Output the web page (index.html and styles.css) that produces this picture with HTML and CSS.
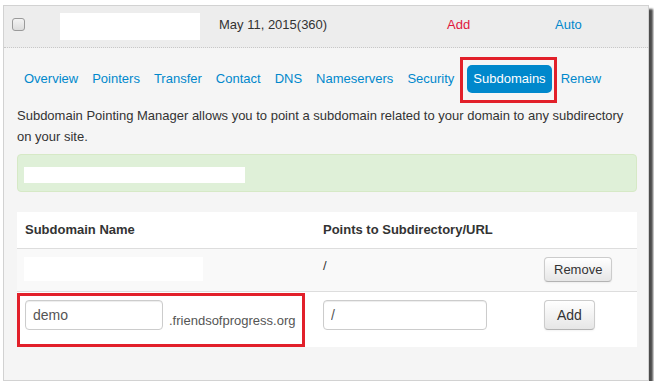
FILE: index.html
```html
<!DOCTYPE html>
<html lang="en">
<head>
  <title>Subdomains</title>
  <link rel="stylesheet" href="styles.css">
</head>
<body>

  <div class="shot">
    <div class="domain-row">
      <div class="cell-check"><span class="checkbox"></span></div>
      <div><span class="mask mask-name"></span></div>
      <div class="date">May 11, 2015(360)</div>
      <div><a class="link-add" href="#">Add</a></div>
      <div><a class="link-auto" href="#">Auto</a></div>
    </div>

    <div class="panel">
      <ul class="tabs">
        <li><a href="#">Overview</a></li>
        <li><a href="#">Pointers</a></li>
        <li><a href="#">Transfer</a></li>
        <li><a href="#">Contact</a></li>
        <li><a href="#">DNS</a></li>
        <li><a href="#">Nameservers</a></li>
        <li><a href="#">Security</a></li>
        <li class="active"><a href="#">Subdomains</a></li>
        <li><a href="#">Renew</a></li>
      </ul>

      <p class="intro">Subdomain Pointing Manager allows you to point a subdomain related to your domain to any subdirectory<br>on your site.</p>

      <div class="alert"><span class="mask mask-alert"></span></div>

      <table class="subs">
        <thead>
          <tr>
            <th class="col-name">Subdomain Name</th>
            <th class="col-path">Points to Subdirectory/URL</th>
            <th></th>
          </tr>
        </thead>
        <tbody>
          <tr class="striped">
            <td><span class="mask mask-sub"></span></td>
            <td class="path">/</td>
            <td><button class="btn btn-small">Remove</button></td>
          </tr>
          <tr class="new-row">
            <td>
              <div class="field marked">
                <input type="text" class="input-name" value="demo">
                <span class="suffix">.friendsofprogress.org</span>
              </div>
            </td>
            <td><input type="text" class="input-path" value="/"></td>
            <td><button class="btn">Add</button></td>
          </tr>
        </tbody>
      </table>
    </div>
  </div>

</body>
</html>
```

FILE: styles.css
```css
:root {
  --link: #0088cc;
  --text: #333;
  --mark: #e2202a;
}

* {
  box-sizing: border-box;
}

body {
  margin: 0;
  background: #fff;
  font-family: 'Liberation Sans', Arial, sans-serif;
  font-size: 13px;
  color: var(--text);
}

a {
  text-decoration: none;
}

.shot {
  margin: 5px 0 0 3px;
  width: 646px;
  height: 376px;
  border: 1px solid #d2d2d2;
  background: #f5f5f5;
  box-shadow: 4px 4px 2px rgba(0, 0, 0, 0.7);
}

/* domain list row */
.domain-row {
  display: grid;
  grid-template-columns: 56px 159px 228px 108px 1fr;
  align-items: center;
  height: 42px;
  background: #ededed;
  border-bottom: 1px dotted #c8c8c8;
}

.cell-check {
  padding-left: 8px;
  display: flex;
  margin-top: -5px;
}

.checkbox {
  width: 13px;
  height: 13px;
  border: 1px solid #9a9a9a;
  border-radius: 3px;
  background: linear-gradient(#f3f3f3, #dcdcdc);
}

.mask {
  display: block;
  background: #fff;
}

.mask-name {
  width: 140px;
  height: 27px;
}

.date {
  margin-top: -5px;
}

.link-add {
  color: #e0183c;
  display: block;
  margin-top: -5px;
}

.link-auto {
  color: var(--link);
  display: block;
  margin-top: -5px;
}

/* panel */
.panel {
  padding: 17px 11px 0 13px;
}

.tabs {
  list-style: none;
  margin: 0;
  padding: 0 0 0 2px;
  display: flex;
}

.tabs li {
  margin-right: 4px;
  position: relative;
}

.tabs a {
  display: block;
  padding: 5px 5px;
  line-height: 18px;
  color: var(--link);
  border-radius: 5px;
}

.tabs li.active {
  margin-left: 4px;
}

.tabs li.active a {
  padding: 5px 6px;
  background: #0088cc;
  color: #fff;
}

.tabs li.active::after {
  content: '';
  position: absolute;
  left: -7px;
  top: -8px;
  right: -5px;
  bottom: -10px;
  border: 3px solid var(--mark);
}

.intro {
  margin: 12px 0 7px;
  line-height: 21px;
}

.alert {
  background: #dff0d8;
  border: 1px solid #d6e9c6;
  border-radius: 4px;
  padding: 12px 6px 8px;
}

.mask-alert {
  width: 221px;
  height: 16px;
}

/* subdomain table */
.subs {
  margin-top: 20px;
  width: 620px;
  border-collapse: collapse;
  background: #fff;
}

.subs th,
.subs td {
  padding: 8px;
  line-height: 18px;
  text-align: left;
  vertical-align: top;
}

.subs th {
  padding-top: 9px;
  padding-bottom: 9px;
  border-bottom: 1px solid #ddd;
}

.col-name {
  width: 298px;
}

.col-path {
  width: 221px;
}

.subs tbody tr + tr td {
  border-top: 1px solid #ddd;
}

.striped td {
  background: #f9f9f9;
  padding-bottom: 9px;
}

.mask-sub {
  width: 179px;
  height: 24px;
  margin-left: -1px;
}

.path {
  padding-top: 9px;
}

.new-row td {
  padding-bottom: 17px;
}

.field {
  display: flex;
  align-items: flex-end;
  gap: 6px;
  position: relative;
}

.field.marked::after {
  content: '';
  position: absolute;
  left: -8px;
  top: -7px;
  width: 282px;
  height: 48px;
  border: 3px solid var(--mark);
}

.suffix {
  color: #555;
  line-height: 18px;
}

input {
  height: 30px;
  padding: 4px 7px;
  border: 1px solid #ccc;
  border-radius: 4px;
  font-family: inherit;
  font-size: 14px;
  color: #555;
  background: #fff;
  box-shadow: inset 0 1px 1px rgba(0, 0, 0, 0.075);
}

.input-name {
  width: 138px;
}

.input-path {
  width: 164px;
}

.btn {
  height: 30px;
  padding: 4px 12px;
  font-family: inherit;
  font-size: 14px;
  color: #333;
  background: linear-gradient(#ffffff, #e6e6e6);
  border: 1px solid #ccc;
  border-bottom-color: #b3b3b3;
  border-radius: 4px;
  box-shadow: 0 1px 2px rgba(0, 0, 0, 0.05);
  cursor: pointer;
}

.btn-small {
  height: 25px;
  padding: 2px 9px;
  font-size: 13px;
}
```
